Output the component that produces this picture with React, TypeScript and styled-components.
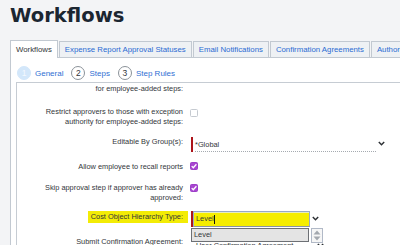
import React from 'react'
import styled, { createGlobalStyle } from 'styled-components'

const GlobalStyle = createGlobalStyle`
    html, body {
        margin: 0;
        padding: 0;
        background: #f3f4f6;
    }
    body {
        font-family: "Liberation Sans", Arial, sans-serif;
        color: #32363a;
    }
`

const Page = styled.div`
    width: 400px;
    height: 245px;
    overflow: hidden;
    box-sizing: border-box;
    padding: 6px 0 0 10px;
`

const Title = styled.h1`
    margin: 0;
    font-family: "DejaVu Sans", sans-serif;
    font-weight: 700;
    font-size: 19.5px;
    line-height: 20px;
    color: #1b2631;
`

const TabBar = styled.div`
    display: flex;
    align-items: flex-end;
    gap: 1px;
    margin-top: 14px;
    white-space: nowrap;
    position: relative;
    z-index: 1;
`

const TabItem = styled.div<{ $active?: boolean }>`
    flex: none;
    display: flex;
    align-items: center;
    box-sizing: border-box;
    height: ${(p) => (p.$active ? 18 : 16)}px;
    margin-bottom: ${(p) => (p.$active ? -1 : 0)}px;
    padding: 0 5px;
    border: 1px solid #c2c9d1;
    border-bottom: none;
    background: ${(p) => (p.$active ? '#ffffff' : '#eef1f4')};
    color: ${(p) => (p.$active ? '#32363a' : '#2a6bd3')};
    font-size: 7.8px;
`

const Panel = styled.div`
    background: #fff;
    border-top: 1px solid #c2c9d1;
    border-left: 1px solid #c2c9d1;
    padding: 8px 0 0 5px;
    height: 200px;
`

const StepRow = styled.div`
    display: flex;
    align-items: center;
    gap: 8px;
    height: 14px;
    padding-left: 1px;
    margin-bottom: 2px;
`

const Step = styled.div`
    display: flex;
    align-items: center;
    gap: 4px;
`

const StepCircle = styled.span<{ $current?: boolean }>`
    width: 14px;
    height: 14px;
    box-sizing: border-box;
    border-radius: 50%;
    border: 1px solid ${(p) => (p.$current ? '#d3e7fa' : '#8b9299')};
    background: ${(p) => (p.$current ? '#d3e7fa' : '#fff')};
    color: ${(p) => (p.$current ? '#f3f8fe' : '#32363a')};
    font-size: 8.5px;
    display: flex;
    align-items: center;
    justify-content: center;
`

const StepLabel = styled.span`
    color: #2f6fd3;
    font-size: 8px;
`

const FormBox = styled.div`
    border-top: 1px solid #c6ccd3;
    border-left: 1px solid #c6ccd3;
    height: 170px;
    position: relative;
`

const Row = styled.div<{ $gap: number }>`
    display: grid;
    grid-template-columns: 166px 1fr;
    column-gap: 7px;
    align-items: start;
    margin-top: ${(p) => p.$gap}px;
`

const Label = styled.div<{ $pad?: number; $lh?: number }>`
    text-align: right;
    font-size: 7.4px;
    line-height: ${(p) => p.$lh ?? 9.5}px;
    padding-top: ${(p) => p.$pad ?? 0}px;
    color: #32363a;
    white-space: nowrap;
`

const Marked = styled.span`
    display: inline-block;
    background: #f3ec06;
    padding: 1px 5px 1px 3px;
    margin-right: -5px;
    line-height: 10px;
`

const Box = styled.span<{ $checked?: boolean; $top?: number }>`
    display: block;
    width: 8px;
    height: 8px;
    box-sizing: border-box;
    margin-top: ${(p) => p.$top ?? 0}px;
    border-radius: 1.5px;
    border: 1px solid ${(p) => (p.$checked ? '#9c3ec8' : '#c5cad0')};
    background: ${(p) => (p.$checked ? '#a845d0' : '#fff')};
    svg {
        display: block;
        margin: -1px;
    }
`

const Field = styled.div<{ $width: number }>`
    display: flex;
    align-items: center;
    height: 15px;
    width: ${(p) => p.$width}px;
    margin-left: 1px;
`

const Required = styled.span`
    width: 2px;
    align-self: stretch;
    background: #ad141a;
    flex: none;
`

const SelectValue = styled.div`
    flex: 1;
    align-self: stretch;
    margin-left: 2px;
    padding: 3px 0 0 0;
    box-sizing: border-box;
    border-bottom: 1px dotted #a5aab0;
    font-size: 7.4px;
    line-height: 9px;
`

const ChevronIcon = styled.svg<{ $dy?: number }>`
    flex: none;
    margin-left: 2px;
    margin-top: ${(p) => p.$dy ?? 0}px;
`

const InputWrap = styled.div`
    position: relative;
    display: flex;
    align-items: center;
    height: 16px;
    margin-left: 1px;
`

const TextInput = styled.div`
    width: 117px;
    height: 16px;
    box-sizing: border-box;
    border: 1px solid #97a8c8;
    border-bottom-color: #8a93a6;
    background: #f5ed00;
    box-shadow: inset 0 1px 0 #e6ecc0;
    font-size: 7.4px;
    line-height: 14px;
    padding-left: 2px;
    display: flex;
    align-items: center;
`

const Caret = styled.span`
    display: inline-block;
    width: 1px;
    height: 9px;
    background: #111;
    margin-left: 0.5px;
`

const DropList = styled.div`
    position: absolute;
    top: 17px;
    left: 0;
    width: 118px;
    height: 14px;
    box-sizing: border-box;
    border: 1px solid #6d7075;
    background: #e4e4e4;
    font-size: 7.4px;
    line-height: 12px;
    padding-left: 2px;
    z-index: 3;
`

const Spinner = styled.div`
    position: absolute;
    top: 17px;
    left: 120px;
    width: 12px;
    height: 15px;
    box-sizing: border-box;
    border: 1px solid #b1b9c7;
    background: #f6f6f6;
    display: flex;
    align-items: center;
    justify-content: center;
    z-index: 3;
`

const HiddenField = styled.div`
    display: flex;
    align-items: center;
    width: 128px;
    margin-left: 6px;
    padding-top: 4px;
    font-size: 7.4px;
    line-height: 9px;
`

const HiddenText = styled.span`
    flex: 1;
`

const Check = () => (
    <svg width="8" height="8" viewBox="0 0 8 8">
        <polyline points="1.7,4.1 3.3,5.7 6.4,2.2" fill="none" stroke="#fff" strokeWidth="1.3" />
    </svg>
)

const Chevron = ({ dy }: { dy?: number }) => (
    <ChevronIcon $dy={dy} width="7" height="5" viewBox="0 0 7 5">
        <polyline points="0.8,0.9 3.5,3.7 6.2,0.9" fill="none" stroke="#2b2f33" strokeWidth="1.4" />
    </ChevronIcon>
)

const tabs = [
    'Workflows',
    'Expense Report Approval Statuses',
    'Email Notifications',
    'Confirmation Agreements',
    'Authorized Approvers',
]

const steps = ['General', 'Steps', 'Step Rules']

export default function App() {
    return (
        <Page>
            <GlobalStyle />
            <Title>Workflows</Title>
            <TabBar>
                {tabs.map((t, i) => (
                    <TabItem key={t} $active={i === 0}>
                        {t}
                    </TabItem>
                ))}
            </TabBar>
            <Panel>
                <StepRow>
                    {steps.map((s, i) => (
                        <Step key={s}>
                            <StepCircle $current={i === 0}>{i + 1}</StepCircle>
                            <StepLabel>{s}</StepLabel>
                        </Step>
                    ))}
                </StepRow>
                <FormBox>
                    <Row $gap={1}>
                        <Label>for employee-added steps:</Label>
                        <div />
                    </Row>
                    <Row $gap={13.5}>
                        <Label>
                            Restrict approvers to those with exception
                            <br />
                            authority for employee-added steps:
                        </Label>
                        <Box $top={2} />
                    </Row>
                    <Row $gap={11}>
                        <Label $lh={10}>Editable By Group(s):</Label>
                        <Field $width={194}>
                            <Required />
                            <SelectValue>*Global</SelectValue>
                            <Chevron dy={-2} />
                        </Field>
                    </Row>
                    <Row $gap={9.5}>
                        <Label>Allow employee to recall reports</Label>
                        <Box $checked $top={0.5}>
                            <Check />
                        </Box>
                    </Row>
                    <Row $gap={12}>
                        <Label>
                            Skip approval step if approver has already
                            <br />
                            approved:
                        </Label>
                        <Box $checked $top={1}>
                            <Check />
                        </Box>
                    </Row>
                    <Row $gap={9}>
                        <Label>
                            <Marked>Cost Object Hierarchy Type:</Marked>
                        </Label>
                        <InputWrap>
                            <Required />
                            <TextInput>
                                Level
                                <Caret />
                            </TextInput>
                            <Chevron dy={-1} />
                            <DropList>Level</DropList>
                            <Spinner>
                                <svg width="8" height="11" viewBox="0 0 8 11">
                                    <polygon points="4,0.5 7.5,4.5 0.5,4.5" fill="#a3a8ae" />
                                    <polygon points="0.5,6.5 7.5,6.5 4,10.5" fill="#a3a8ae" />
                                </svg>
                            </Spinner>
                        </InputWrap>
                    </Row>
                    <Row $gap={10}>
                        <Label>Submit Confirmation Agreement:</Label>
                        <HiddenField>
                            <HiddenText>User Confirmation Agreement</HiddenText>
                            <Chevron />
                        </HiddenField>
                    </Row>
                </FormBox>
            </Panel>
        </Page>
    )
}
